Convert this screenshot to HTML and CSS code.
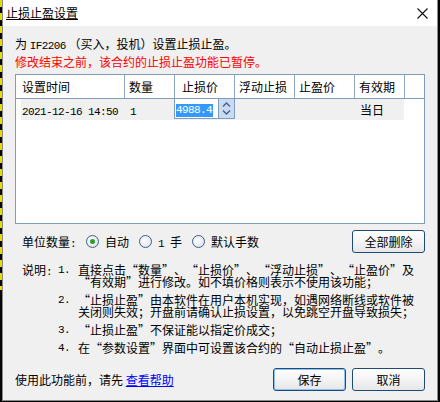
FILE: index.html
```html
<!DOCTYPE html>
<html lang="zh-CN">
<head>
  <meta charset="UTF-8" />
  <title>止损止盈设置</title>
  <link rel="stylesheet" href="styles.css">
</head>
<body>
  <div class="dialog">
    <div class="titlebar">
      <span class="title">止损止盈设置</span>
      <svg class="close" width="11" height="11" viewBox="0 0 11 11">
        <path d="M0.5 0.5 L10.5 10.5 M10.5 0.5 L0.5 10.5" stroke="#111" stroke-width="1.1" fill="none"/>
      </svg>
    </div>

    <div class="content">
      <p class="line">为 <span class="m">IF2206</span> （买入，投机）设置止损止盈。</p>
      <p class="line warn">修改结束之前，该合约的止损止盈功能已暂停。</p>

      <!-- 列表 -->
      <div class="grid">
        <div class="grid-head">
          <div class="th p6">设置时间</div>
          <div class="th">数量</div>
          <div class="th p7">止损价</div>
          <div class="th">浮动止损</div>
          <div class="th">止盈价</div>
          <div class="th">有效期</div>
          <div class="th last"></div>
        </div>
        <div class="grid-row">
          <div class="td d-time"><span class="m">2021-12-16 14:50</span></div>
          <div class="td d-qty"><span class="m">1</span></div>
          <div class="editor">
            <div class="edit-text"><span class="sel m">4988.4</span></div>
            <div class="spin">
              <svg width="9" height="5" viewBox="0 0 9 5"><path d="M1 4.5 L4.5 1 L8 4.5" stroke="#4a5f86" stroke-width="1.4" fill="none"/></svg>
              <svg width="9" height="5" viewBox="0 0 9 5"><path d="M1 0.5 L4.5 4 L8 0.5" stroke="#4a5f86" stroke-width="1.4" fill="none"/></svg>
            </div>
          </div>
          <div class="td d-valid">当日</div>
        </div>
      </div>

      <!-- 单位数量 -->
      <div class="unit-row">
        <span class="unit-label">单位数量<span class="m">:</span></span>
        <span class="radio checked"></span><span class="radio-text">自动</span>
        <span class="radio"></span><span class="radio-text"><span class="m one">1</span>手</span>
        <span class="radio"></span><span class="radio-text">默认手数</span>
        <button class="btn btn-clear">全部删除</button>
      </div>

      <!-- 说明 -->
      <div class="notes">
        <div class="notes-label">说明<span class="m">:</span></div>
        <div class="notes-list">
          <div class="note">
            <span class="num m">1.</span>
            <span class="note-text">直接点击“数量”、“止损价”、“浮动止损”、“止盈价”及<br>“有效期”进行修改。如不填价格则表示不使用该功能；</span>
          </div>
          <div class="note">
            <span class="num m">2.</span>
            <span class="note-text">“止损止盈”由本软件在用户本机实现，如遇网络断线或软件被<br>关闭则失效；开盘前请确认止损设置，以免跳空开盘导致损失；</span>
          </div>
          <div class="note">
            <span class="num m">3.</span>
            <span class="note-text">“止损止盈”不保证能以指定价成交；</span>
          </div>
          <div class="note">
            <span class="num m">4.</span>
            <span class="note-text">在“参数设置”界面中可设置该合约的“自动止损止盈”。</span>
          </div>
        </div>
      </div>

      <div class="footer">
        <span class="hint">使用此功能前，请先 <a href="#" class="help">查看帮助</a></span>
        <button class="btn btn-save">保存</button>
        <button class="btn">取消</button>
      </div>
    </div>
  </div>
</body>
</html>
```

FILE: styles.css
```css
body {
  margin: 0;
  padding-left: 2px;
  background-color: #050505;
  background-image: repeating-linear-gradient(to bottom, #e4dc00 0 7px, #050505 7px 13px);
  background-size: 2px 290px;
  background-repeat: no-repeat;
  font-family: "Noto Sans CJK SC", sans-serif;
  font-size: 12px;
  color: #000;
  text-spacing-trim: space-all;
}

.m {
  font-family: "Liberation Mono", monospace;
  font-size: 11px;
  letter-spacing: -0.6px;
}

.dialog {
  width: 436px;
  height: 401px;
  box-sizing: border-box;
  border: 1px solid #8a8a8a;
  border-top: none;
  background-color: #f0f0f0;
}

.titlebar {
  height: 26px;
  background-color: #fff;
  display: flex;
  align-items: center;
  padding: 0 9px 0 3px;
}

.title {
  flex: 1;
  line-height: 14px;
  text-decoration: underline;
  text-underline-offset: 1px;
}

.close {
  display: block;
}

.content {
  padding: 9px 12px 0;
}

.line {
  margin: 0;
  height: 18px;
  line-height: 18px;
  white-space: nowrap;
}

.warn {
  color: #ff0000;
}

/* 列表 */
.grid {
  margin-top: 3px;
  height: 150px;
  box-sizing: border-box;
  border: 1px solid #7f9db9;
  background-color: #fff;
}

.grid-head {
  display: grid;
  grid-template-columns: 109px 50px 60px 60px 60px 50px 1fr;
  height: 24px;
  box-sizing: border-box;
  border-bottom: 1px solid #7f9db9;
}

.th {
  border-right: 1px solid #8ea6c3;
  line-height: 23px;
  padding-left: 4px;
  white-space: nowrap;
}

.th.p6 {
  padding-left: 6px;
}

.th.p7 {
  padding-left: 7px;
}

.th.last {
  border-right: none;
}

.grid-row {
  display: flex;
  margin-left: 5px;
  width: 383px;
  height: 21px;
  background-color: #f0f0f0;
}

.td {
  line-height: 21px;
  white-space: nowrap;
}

.d-time {
  width: 102px;
  padding-left: 1px;
}

.d-qty {
  width: 44px;
  padding-left: 6px;
}

.d-valid {
  margin-left: 120px;
  padding-left: 5px;
}

.editor {
  width: 61px;
  height: 21px;
  margin-top: -1px;
  box-sizing: border-box;
  border: 1px solid #7f9db9;
  background-color: #fff;
  display: flex;
}

.edit-text {
  flex: 1;
  padding-left: 1px;
}

.sel {
  display: inline-block;
  background-color: #3399ff;
  color: #fff;
  line-height: 13px;
  height: 13px;
  padding-right: 1px;
}

.spin {
  width: 15px;
  border-left: 1px solid #7f9db9;
  background-color: #c8dbf2;
  display: flex;
  flex-direction: column;
  align-items: center;
  justify-content: space-around;
  padding: 1px 0;
}

.spin svg {
  display: block;
}

/* 单位数量 */
.unit-row {
  margin-top: 6px;
  height: 23px;
  display: flex;
  align-items: center;
  padding-left: 7px;
}

.unit-label {
  margin-right: 10px;
}

.radio {
  width: 11px;
  height: 11px;
  border: 1px solid #3d5f86;
  border-radius: 50%;
  background: radial-gradient(circle at 40% 40%, #ffffff, #d6dbe2);
  position: relative;
  margin-right: 6px;
}

.radio.checked::after {
  content: "";
  position: absolute;
  left: 3px;
  top: 3px;
  width: 5px;
  height: 5px;
  border-radius: 50%;
  background-color: #2a9c34;
}

.radio-text {
  margin-right: 10px;
}

.one {
  margin-right: 6px;
}

.btn {
  font-family: "Noto Sans CJK SC", sans-serif;
  font-size: 12px;
  color: #000;
  width: 73px;
  height: 23px;
  padding: 0;
  border: 1px solid #1e4a78;
  border-radius: 3px;
  background: linear-gradient(to bottom, #ffffff, #f4f4f4 50%, #e6e6e6);
}

.btn-clear {
  margin-left: auto;
}

/* 说明 */
.notes {
  margin-top: 11px;
  display: flex;
  padding-left: 7px;
  line-height: 12px;
}

.notes-label {
  width: 36px;
}

.note {
  display: flex;
  margin-bottom: 6px;
}

.num {
  width: 20px;
}

.note-text {
  white-space: nowrap;
}

.footer {
  margin-top: 8px;
  display: flex;
  align-items: center;
  gap: 6px;
}

.hint {
  flex: 1;
}

.help {
  color: #0000ff;
  text-decoration: underline;
}

.btn-save {
  border-color: #1b4a7e;
  box-shadow: inset 0 0 0 1px #8fc2ef;
}
```
